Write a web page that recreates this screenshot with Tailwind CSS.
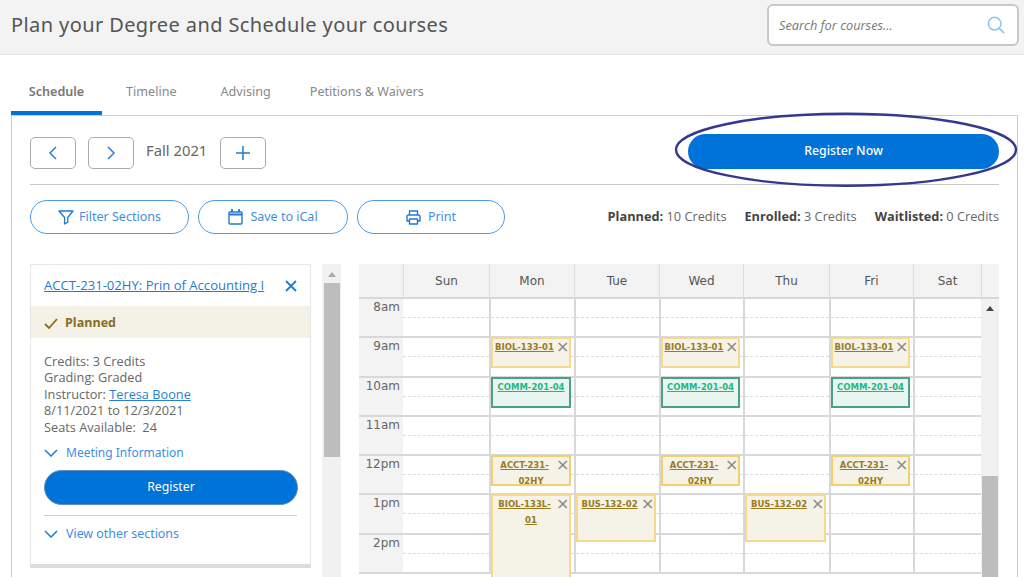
<!DOCTYPE html>
<html>
<head>
<meta charset="utf-8">
<script src="https://cdn.jsdelivr.net/npm/@tailwindcss/browser@4"></script>
</head>
<body class="bg-white font-['Open_Sans',sans-serif] text-[#555]">
<div class="relative w-[1024px] h-[577px] overflow-hidden">
  <header class="h-[55px] bg-[#f3f3f3] border-b border-[#e4e4e4] flex items-start justify-between pl-[11px] pr-[5px] pt-[4px]">
    <h1 class="font-['Noto_Sans',sans-serif] text-[20px] leading-[42px] text-[#555] tracking-[0.4px]">Plan your Degree and Schedule your courses</h1>
    <div class="w-[252px] h-[42px] bg-white border-2 border-[#c8c8c8] rounded-[6px] flex items-center justify-between pl-[10px] pr-[12px]">
      <span class="italic text-[12.8px] leading-[20px] text-[#777]">Search for courses...</span>
      <svg class="w-[18px] h-[18px]" viewBox="0 0 20 20" fill="none" stroke="#8cc4f2" stroke-width="1.7"><circle cx="8.5" cy="8.5" r="7"/><path d="M13.5 13.5 19 19"/></svg>
    </div>
  </header>

  <nav class="h-[60px] pl-[11px] flex items-start font-['Noto_Sans',sans-serif] text-[12.6px] text-[#888]">
    <div class="w-[91px] h-[60px] border-b-4 border-[#0073d9] text-center pt-[28px] font-semibold text-[#777]">Schedule</div>
    <div class="ml-[24px] pt-[28px]">Timeline</div>
    <div class="ml-[44px] pt-[28px]">Advising</div>
    <div class="ml-[39px] pt-[28px]">Petitions &amp; Waivers</div>
  </nav>

  <main class="ml-[11px] mr-[6px] h-[462px] border-l border-t border-r border-[#ccc] pl-[18px] pr-[18px]">
    <section class="h-[69px] border-b border-[#c8c8c8] flex items-start pt-[18px]">
      <button class="mt-[3px] w-[46px] h-[32px] border border-[#aaa] rounded-[5px] flex items-center justify-center"><svg class="w-[10px] h-[14px]" viewBox="0 0 10 14" fill="none" stroke="#2a7fd6" stroke-width="1.5"><path d="M8 1 2 7l6 6"/></svg></button>
      <button class="mt-[3px] ml-[12px] w-[46px] h-[32px] border border-[#aaa] rounded-[5px] flex items-center justify-center"><svg class="w-[10px] h-[14px]" viewBox="0 0 10 14" fill="none" stroke="#2a7fd6" stroke-width="1.5"><path d="m2 1 6 6-6 6"/></svg></button>
      <span class="mt-[3px] ml-[12px] font-['Noto_Sans',sans-serif] text-[14.8px] leading-[27px] text-[#666] w-[62px] whitespace-nowrap">Fall 2021</span>
      <button class="mt-[3px] ml-[12px] w-[46px] h-[32px] border border-[#aaa] rounded-[5px] flex items-center justify-center"><svg class="w-[14px] h-[14px]" viewBox="0 0 14 14" stroke="#1f7ad6" stroke-width="1.5"><path d="M7 0v14M0 7h14"/></svg></button>
      <button class="ml-auto w-[311px] h-[35px] bg-[#0073d9] rounded-full text-white font-['Noto_Sans',sans-serif] text-[12.3px] font-medium">Register Now</button>
    </section>

    <section class="h-[79px] flex items-start pt-[15px] font-['Noto_Sans',sans-serif] text-[12.5px] text-[#3f8ee0]">
      <button class="w-[159px] h-[34px] border border-[#4d9be6] rounded-full flex items-center justify-center gap-[5px]"><svg class="w-[16px] h-[16px]" viewBox="0 0 16 16" fill="none" stroke="#1f7ad6" stroke-width="1.3" stroke-linejoin="round"><path d="M1 2h14L9.8 8.5v4.6L6.6 15V8.5z"/></svg>Filter Sections</button>
      <button class="ml-[9px] w-[150px] h-[34px] border border-[#4d9be6] rounded-full flex items-center justify-center gap-[7px]"><svg class="w-[15px] h-[16px]" viewBox="0 0 15 16" fill="none" stroke="#1f7ad6" stroke-width="1.4"><rect x="1" y="3" width="13" height="12" rx="1"/><path d="M1 5.5h13" stroke-width="2"/><path d="M4 0v3M11 0v3" stroke-width="1.8"/></svg>Save to iCal</button>
      <button class="ml-[9px] w-[148px] h-[34px] border border-[#4d9be6] rounded-full flex items-center justify-center gap-[7px]"><svg class="w-[15px] h-[15px]" viewBox="0 0 15 15" fill="none" stroke="#1f7ad6" stroke-width="1.4" stroke-linejoin="round"><path d="M3.5 5V1h8v4"/><path d="M3 11H1V6.500A1.500 1.500 0 0 1 2.500 5h10A1.500 1.500 0 0 1 14 6.500V11h-2"/><rect x="3.500" y="9" width="8" height="5"/></svg>Print</button>
      <div class="ml-auto pt-[7px] text-[12.75px] leading-[18px] text-[#666] flex gap-[18px] font-['Open_Sans',sans-serif] whitespace-nowrap">
        <span><b class="font-bold text-[#444]">Planned:</b> 10 Credits</span>
        <span><b class="font-bold text-[#444]">Enrolled:</b> 3 Credits</span>
        <span><b class="font-bold text-[#444]">Waitlisted:</b> 0 Credits</span>
      </div>
    </section>

    <section class="flex items-start">
      <div class="w-[281px] h-[304px] border border-[#e6e6e6] border-b-[4px] border-b-[#dcdcdc] shrink-0">
        <div class="h-[41px] pl-[13px] pr-[13px] flex items-center justify-between">
          <a class="text-[13.1px] text-[#1f7ad6] underline whitespace-nowrap">ACCT-231-02HY: Prin of Accounting I</a>
          <svg class="w-[12px] h-[12px]" viewBox="0 0 12 12" stroke="#1f7ad6" stroke-width="1.8"><path d="m1 1 10 10M11 1 1 11"/></svg>
        </div>
        <div class="h-[32px] bg-[#f4f1e7] pl-[13px] pt-[2px] flex items-center gap-[7px] text-[12.5px] font-bold text-[#8a6d1e]">
          <svg class="w-[14px] h-[11px]" viewBox="0 0 14 11" fill="none" stroke="#8a6d1e" stroke-width="1.8"><path d="m1 6 4 4 8-9"/></svg>Planned
        </div>
        <div class="pl-[13px] pt-[15px] text-[12.75px] leading-[16.4px] text-[#666]">
          <div>Credits: 3 Credits</div>
          <div>Grading: Graded</div>
          <div>Instructor: <a class="text-[#2a7fd6] underline">Teresa Boone</a></div>
          <div>8/11/2021 to 12/3/2021</div>
          <div>Seats Available:&nbsp; 24</div>
        </div>
        <div class="pl-[13px] mt-[10px] flex items-center gap-[8px] font-['Noto_Sans',sans-serif] text-[12px] leading-[16px] text-[#3f8ee0]">
          <svg class="w-[14px] h-[8px]" viewBox="0 0 14 8" fill="none" stroke="#1f7ad6" stroke-width="1.5"><path d="m1 1 6 6 6-6"/></svg>Meeting Information
        </div>
        <button class="ml-[13px] mt-[9px] w-[254px] h-[35px] rounded-full bg-[#0073d9] border border-[#5c8fbf] text-white font-['Noto_Sans',sans-serif] text-[12.3px]">Register</button>
        <div class="mx-[13px] mt-[10px] border-t border-[#ccc]"></div>
        <div class="pl-[13px] mt-[10px] flex items-center gap-[8px] font-['Noto_Sans',sans-serif] text-[12.4px] leading-[16px] text-[#3f8ee0]">
          <svg class="w-[14px] h-[8px]" viewBox="0 0 14 8" fill="none" stroke="#1f7ad6" stroke-width="1.5"><path d="m1 1 6 6 6-6"/></svg>View other sections
        </div>
      </div>

      <div class="ml-[11px] w-[19px] h-[314px] bg-[#f1f1f1] shrink-0 flex flex-col items-center">
        <div class="mt-[8px] w-0 h-0 border-x-[4px] border-x-transparent border-b-[5px] border-b-[#aaa]"></div>
        <div class="mt-[6px] w-[16px] h-[174px] bg-[#bdbdbd]"></div>
      </div>

      <div class="ml-[18px] w-[640px] h-[314px] overflow-hidden font-['DejaVu_Sans',sans-serif]">
        <div class="grid grid-cols-[45px_86px_85px_85px_84px_86px_84px_68px_17px] h-[35px] bg-[#f3f3f3] border-b-2 border-[#d8d8d8] text-[12px] text-[#555] text-center leading-[34px]">
          <div class="border-r border-[#dcdcdc]"></div>
          <div class="border-r border-[#dcdcdc]">Sun</div>
          <div class="border-r border-[#dcdcdc]">Mon</div>
          <div class="border-r border-[#dcdcdc]">Tue</div>
          <div class="border-r border-[#dcdcdc]">Wed</div>
          <div class="border-r border-[#dcdcdc]">Thu</div>
          <div class="border-r border-[#dcdcdc]">Fri</div>
          <div class="border-r border-[#dcdcdc]">Sat</div>
          <div></div>
        </div>
        <div class="flex h-[279px]">
          <div class="w-[622px] shrink-0 grid grid-cols-[44px_86px_85px_85px_84px_86px_84px_68px] grid-rows-[repeat(7,39.3px)] bg-white">
            <!-- 8am -->
            <div class="bg-[#f3f3f3] border-b-2 border-[#d8d8d8] text-right pr-[3px] text-[12px] leading-[17px] text-[#666]">8am</div>
            <div class="border-b-2 border-[#d8d8d8] relative"><div class="mt-[18px] border-t border-dashed border-[#ddd]"></div></div>
            <div class="border-b-2 border-l-2 border-[#d8d8d8]"><div class="mt-[18px] border-t border-dashed border-[#ddd]"></div></div>
            <div class="border-b-2 border-l-2 border-[#d8d8d8]"><div class="mt-[18px] border-t border-dashed border-[#ddd]"></div></div>
            <div class="border-b-2 border-l-2 border-[#d8d8d8]"><div class="mt-[18px] border-t border-dashed border-[#ddd]"></div></div>
            <div class="border-b-2 border-l-2 border-[#d8d8d8]"><div class="mt-[18px] border-t border-dashed border-[#ddd]"></div></div>
            <div class="border-b-2 border-l-2 border-[#d8d8d8]"><div class="mt-[18px] border-t border-dashed border-[#ddd]"></div></div>
            <div class="border-b-2 border-l-2 border-[#d8d8d8]"><div class="mt-[18px] border-t border-dashed border-[#ddd]"></div></div>
            <!-- 9am -->
            <div class="bg-[#f3f3f3] border-b-2 border-[#d8d8d8] text-right pr-[3px] text-[12px] leading-[17px] text-[#666]">9am</div>
            <div class="border-b-2 border-[#d8d8d8] relative"><div class="mt-[18px] border-t border-dashed border-[#ddd]"></div></div>
            <div class="relative border-b-2 border-l-2 border-[#d8d8d8]"><div class="mt-[18px] border-t border-dashed border-[#ddd]"></div>
              <div class="absolute left-0 right-[3px] -top-px h-[31px] bg-[#f5f2e8] border-2 border-[#f6d98a] text-center font-bold text-[8.5px] leading-[16px] text-[#9a7a1c]"><span class="float-right w-[13px] text-[#888] text-[16px] font-normal leading-[16px]">×</span><a class="underline">BIOL-133-01</a></div>
            </div>
            <div class="border-b-2 border-l-2 border-[#d8d8d8]"><div class="mt-[18px] border-t border-dashed border-[#ddd]"></div></div>
            <div class="relative border-b-2 border-l-2 border-[#d8d8d8]"><div class="mt-[18px] border-t border-dashed border-[#ddd]"></div>
              <div class="absolute left-0 right-[3px] -top-px h-[31px] bg-[#f5f2e8] border-2 border-[#f6d98a] text-center font-bold text-[8.5px] leading-[16px] text-[#9a7a1c]"><span class="float-right w-[13px] text-[#888] text-[16px] font-normal leading-[16px]">×</span><a class="underline">BIOL-133-01</a></div>
            </div>
            <div class="border-b-2 border-l-2 border-[#d8d8d8]"><div class="mt-[18px] border-t border-dashed border-[#ddd]"></div></div>
            <div class="relative border-b-2 border-l-2 border-[#d8d8d8]"><div class="mt-[18px] border-t border-dashed border-[#ddd]"></div>
              <div class="absolute left-0 right-[3px] -top-px h-[31px] bg-[#f5f2e8] border-2 border-[#f6d98a] text-center font-bold text-[8.5px] leading-[16px] text-[#9a7a1c]"><span class="float-right w-[13px] text-[#888] text-[16px] font-normal leading-[16px]">×</span><a class="underline">BIOL-133-01</a></div>
            </div>
            <div class="border-b-2 border-l-2 border-[#d8d8d8]"><div class="mt-[18px] border-t border-dashed border-[#ddd]"></div></div>
            <!-- 10am -->
            <div class="bg-[#f3f3f3] border-b-2 border-[#d8d8d8] text-right pr-[3px] text-[12px] leading-[17px] text-[#666]">10am</div>
            <div class="border-b-2 border-[#d8d8d8] relative"><div class="mt-[18px] border-t border-dashed border-[#ddd]"></div></div>
            <div class="relative border-b-2 border-l-2 border-[#d8d8d8]"><div class="mt-[18px] border-t border-dashed border-[#ddd]"></div>
              <div class="absolute left-0 right-[3px] -top-px h-[31px] bg-[#e9f6f0] border-2 border-[#4aa08a] text-center font-bold text-[8.5px] leading-[16px] text-[#1fb783]"><a class="underline">COMM-201-04</a></div>
            </div>
            <div class="border-b-2 border-l-2 border-[#d8d8d8]"><div class="mt-[18px] border-t border-dashed border-[#ddd]"></div></div>
            <div class="relative border-b-2 border-l-2 border-[#d8d8d8]"><div class="mt-[18px] border-t border-dashed border-[#ddd]"></div>
              <div class="absolute left-0 right-[3px] -top-px h-[31px] bg-[#e9f6f0] border-2 border-[#4aa08a] text-center font-bold text-[8.5px] leading-[16px] text-[#1fb783]"><a class="underline">COMM-201-04</a></div>
            </div>
            <div class="border-b-2 border-l-2 border-[#d8d8d8]"><div class="mt-[18px] border-t border-dashed border-[#ddd]"></div></div>
            <div class="relative border-b-2 border-l-2 border-[#d8d8d8]"><div class="mt-[18px] border-t border-dashed border-[#ddd]"></div>
              <div class="absolute left-0 right-[3px] -top-px h-[31px] bg-[#e9f6f0] border-2 border-[#4aa08a] text-center font-bold text-[8.5px] leading-[16px] text-[#1fb783]"><a class="underline">COMM-201-04</a></div>
            </div>
            <div class="border-b-2 border-l-2 border-[#d8d8d8]"><div class="mt-[18px] border-t border-dashed border-[#ddd]"></div></div>
            <!-- 11am -->
            <div class="bg-[#f3f3f3] border-b-2 border-[#d8d8d8] text-right pr-[3px] text-[12px] leading-[17px] text-[#666]">11am</div>
            <div class="border-b-2 border-[#d8d8d8] relative"><div class="mt-[18px] border-t border-dashed border-[#ddd]"></div></div>
            <div class="border-b-2 border-l-2 border-[#d8d8d8]"><div class="mt-[18px] border-t border-dashed border-[#ddd]"></div></div>
            <div class="border-b-2 border-l-2 border-[#d8d8d8]"><div class="mt-[18px] border-t border-dashed border-[#ddd]"></div></div>
            <div class="border-b-2 border-l-2 border-[#d8d8d8]"><div class="mt-[18px] border-t border-dashed border-[#ddd]"></div></div>
            <div class="border-b-2 border-l-2 border-[#d8d8d8]"><div class="mt-[18px] border-t border-dashed border-[#ddd]"></div></div>
            <div class="border-b-2 border-l-2 border-[#d8d8d8]"><div class="mt-[18px] border-t border-dashed border-[#ddd]"></div></div>
            <div class="border-b-2 border-l-2 border-[#d8d8d8]"><div class="mt-[18px] border-t border-dashed border-[#ddd]"></div></div>
            <!-- 12pm -->
            <div class="bg-[#f3f3f3] border-b-2 border-[#d8d8d8] text-right pr-[3px] text-[12px] leading-[17px] text-[#666]">12pm</div>
            <div class="border-b-2 border-[#d8d8d8] relative"><div class="mt-[18px] border-t border-dashed border-[#ddd]"></div></div>
            <div class="relative border-b-2 border-l-2 border-[#d8d8d8]"><div class="mt-[18px] border-t border-dashed border-[#ddd]"></div>
              <div class="absolute left-0 right-[3px] -top-px h-[31px] bg-[#f5f2e8] border-2 border-[#f3d06a] text-center font-bold text-[8.5px] leading-[16px] text-[#9a7a1c]"><span class="float-right w-[13px] text-[#888] text-[16px] font-normal leading-[16px]">×</span><a class="underline">ACCT-231-</a><br>02HY</div>
            </div>
            <div class="border-b-2 border-l-2 border-[#d8d8d8]"><div class="mt-[18px] border-t border-dashed border-[#ddd]"></div></div>
            <div class="relative border-b-2 border-l-2 border-[#d8d8d8]"><div class="mt-[18px] border-t border-dashed border-[#ddd]"></div>
              <div class="absolute left-0 right-[3px] -top-px h-[31px] bg-[#f5f2e8] border-2 border-[#f3d06a] text-center font-bold text-[8.5px] leading-[16px] text-[#9a7a1c]"><span class="float-right w-[13px] text-[#888] text-[16px] font-normal leading-[16px]">×</span><a class="underline">ACCT-231-</a><br>02HY</div>
            </div>
            <div class="border-b-2 border-l-2 border-[#d8d8d8]"><div class="mt-[18px] border-t border-dashed border-[#ddd]"></div></div>
            <div class="relative border-b-2 border-l-2 border-[#d8d8d8]"><div class="mt-[18px] border-t border-dashed border-[#ddd]"></div>
              <div class="absolute left-0 right-[3px] -top-px h-[31px] bg-[#f5f2e8] border-2 border-[#f3d06a] text-center font-bold text-[8.5px] leading-[16px] text-[#9a7a1c]"><span class="float-right w-[13px] text-[#888] text-[16px] font-normal leading-[16px]">×</span><a class="underline">ACCT-231-</a><br>02HY</div>
            </div>
            <div class="border-b-2 border-l-2 border-[#d8d8d8]"><div class="mt-[18px] border-t border-dashed border-[#ddd]"></div></div>
            <!-- 1pm -->
            <div class="bg-[#f3f3f3] border-b-2 border-[#d8d8d8] text-right pr-[3px] text-[12px] leading-[17px] text-[#666]">1pm</div>
            <div class="border-b-2 border-[#d8d8d8] relative"><div class="mt-[18px] border-t border-dashed border-[#ddd]"></div></div>
            <div class="relative border-b-2 border-l-2 border-[#d8d8d8]"><div class="mt-[18px] border-t border-dashed border-[#ddd]"></div>
              <div class="absolute z-10 left-0 right-[3px] -top-px h-[100px] bg-[#f5f2e8] border-2 border-[#f6d98a] text-center font-bold text-[8.5px] leading-[16px] text-[#9a7a1c]"><span class="float-right w-[13px] text-[#888] text-[16px] font-normal leading-[16px]">×</span><a class="underline">BIOL-133L-<br>01</a></div>
            </div>
            <div class="relative border-b-2 border-l-2 border-[#d8d8d8]"><div class="mt-[18px] border-t border-dashed border-[#ddd]"></div>
              <div class="absolute z-10 left-0 right-[3px] -top-px h-[48px] bg-[#f5f2e8] border-2 border-[#f6d98a] text-center font-bold text-[8.5px] leading-[16px] text-[#9a7a1c]"><span class="float-right w-[13px] text-[#888] text-[16px] font-normal leading-[16px]">×</span><a class="underline">BUS-132-02</a></div>
            </div>
            <div class="border-b-2 border-l-2 border-[#d8d8d8]"><div class="mt-[18px] border-t border-dashed border-[#ddd]"></div></div>
            <div class="relative border-b-2 border-l-2 border-[#d8d8d8]"><div class="mt-[18px] border-t border-dashed border-[#ddd]"></div>
              <div class="absolute z-10 left-0 right-[3px] -top-px h-[48px] bg-[#f5f2e8] border-2 border-[#f6d98a] text-center font-bold text-[8.5px] leading-[16px] text-[#9a7a1c]"><span class="float-right w-[13px] text-[#888] text-[16px] font-normal leading-[16px]">×</span><a class="underline">BUS-132-02</a></div>
            </div>
            <div class="border-b-2 border-l-2 border-[#d8d8d8]"><div class="mt-[18px] border-t border-dashed border-[#ddd]"></div></div>
            <div class="border-b-2 border-l-2 border-[#d8d8d8]"><div class="mt-[18px] border-t border-dashed border-[#ddd]"></div></div>
            <!-- 2pm -->
            <div class="bg-[#f3f3f3] border-b-2 border-[#d8d8d8] text-right pr-[3px] text-[12px] leading-[17px] text-[#666]">2pm</div>
            <div class="border-b-2 border-[#d8d8d8] relative"><div class="mt-[18px] border-t border-dashed border-[#ddd]"></div></div>
            <div class="border-b-2 border-l-2 border-[#d8d8d8]"><div class="mt-[18px] border-t border-dashed border-[#ddd]"></div></div>
            <div class="border-b-2 border-l-2 border-[#d8d8d8]"><div class="mt-[18px] border-t border-dashed border-[#ddd]"></div></div>
            <div class="border-b-2 border-l-2 border-[#d8d8d8]"><div class="mt-[18px] border-t border-dashed border-[#ddd]"></div></div>
            <div class="border-b-2 border-l-2 border-[#d8d8d8]"><div class="mt-[18px] border-t border-dashed border-[#ddd]"></div></div>
            <div class="border-b-2 border-l-2 border-[#d8d8d8]"><div class="mt-[18px] border-t border-dashed border-[#ddd]"></div></div>
            <div class="border-b-2 border-l-2 border-[#d8d8d8]"><div class="mt-[18px] border-t border-dashed border-[#ddd]"></div></div>
          </div>
          <div class="w-[18px] bg-[#f1f1f1] flex flex-col items-center">
            <div class="mt-[7px] w-0 h-0 border-x-[4px] border-x-transparent border-b-[5px] border-b-[#444]"></div>
            <div class="mt-[165px] w-[16px] flex-1 bg-[#bdbdbd]"></div>
          </div>
        </div>
      </div>
    </section>
  </main>

  <svg class="absolute left-[672px] top-[110px] w-[349px] h-[80px] pointer-events-none" viewBox="0 0 349 80" fill="none"><ellipse cx="174" cy="39.7" rx="170" ry="36" stroke="#34398f" stroke-width="2.4"/></svg>
</div>
</body>
</html>
